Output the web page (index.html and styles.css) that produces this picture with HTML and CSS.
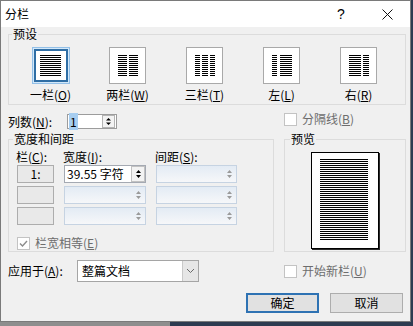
FILE: index.html
```html
<!DOCTYPE html>
<html lang="zh-CN">
<head>
<meta charset="utf-8">
<title>分栏</title>
<link rel="stylesheet" href="styles.css">
</head>
<body>
<div class="window">
  <div class="titlebar">
    <span class="title">分栏</span>
    <span class="cap help">?</span>
    <span class="cap close"><svg width="11" height="11" viewBox="0 0 11 11"><path d="M0.5 0.5L10.5 10.5M10.5 0.5L0.5 10.5" stroke="#111" stroke-width="1"/></svg></span>
  </div>
  <div class="content">
    <fieldset class="group presets">
      <legend>预设</legend>
      <div class="preset-grid">
        <div class="preset">
          <div class="icon sel"><div class="sheet"><i class="col w21"></i></div></div>
          <div class="plabel">一栏(<u>O</u>)</div>
        </div>
        <div class="preset">
          <div class="icon"><div class="sheet"><i class="col w9"></i><i class="col w9"></i></div></div>
          <div class="plabel">两栏(<u>W</u>)</div>
        </div>
        <div class="preset">
          <div class="icon"><div class="sheet"><i class="col w5"></i><i class="col w6"></i><i class="col w5"></i></div></div>
          <div class="plabel">三栏(<u>T</u>)</div>
        </div>
        <div class="preset">
          <div class="icon"><div class="sheet wide-gap"><i class="col w5"></i><i class="col w12"></i></div></div>
          <div class="plabel">左(<u>L</u>)</div>
        </div>
        <div class="preset">
          <div class="icon"><div class="sheet"><i class="col w12"></i><i class="col w6"></i></div></div>
          <div class="plabel">右(<u>R</u>)</div>
        </div>
      </div>
    </fieldset>

    <div class="split numrow">
      <div class="inline">
        <span class="lbl num-lbl">列数(<u>N</u>):</span>
        <div class="spin num-spin">
          <span class="val"><span class="selected">1</span></span>
          <span class="spinbtn boxed"><svg width="11" height="11" viewBox="0 0 11 11"><path d="M3 4.5h5L5.5 2z M3 6.5h5L5.5 9z" fill="#000"/></svg></span>
        </div>
      </div>
      <div class="check disabled up"><span class="box"></span><span>分隔线(<u>B</u>)</span></div>
    </div>

    <div class="split groups">
      <fieldset class="group widths">
        <legend>宽度和间距</legend>
        <div class="table">
          <div class="th">栏(<u>C</u>):</div>
          <div class="th">宽度(<u>I</u>):</div>
          <div class="th">间距(<u>S</u>):</div>

          <div class="colbtn">1:</div>
          <div class="spin field">
            <span class="val">39.55 字符</span>
            <span class="spinbtn boxed"><svg width="11" height="14" viewBox="0 0 11 14"><path d="M3 6h5L5.5 3z M3 8h5L5.5 11z" fill="#000"/></svg></span>
          </div>
          <div class="spin field off">
            <span class="val"></span>
            <span class="spinbtn"><svg width="11" height="14" viewBox="0 0 11 14"><path d="M3 6h5L5.5 3z M3 8h5L5.5 11z" fill="#9a9a9a"/></svg></span>
          </div>

          <div class="colbtn"></div>
          <div class="spin field off">
            <span class="val"></span>
            <span class="spinbtn"><svg width="11" height="14" viewBox="0 0 11 14"><path d="M3 6h5L5.5 3z M3 8h5L5.5 11z" fill="#9a9a9a"/></svg></span>
          </div>
          <div class="spin field off">
            <span class="val"></span>
            <span class="spinbtn"><svg width="11" height="14" viewBox="0 0 11 14"><path d="M3 6h5L5.5 3z M3 8h5L5.5 11z" fill="#9a9a9a"/></svg></span>
          </div>

          <div class="colbtn"></div>
          <div class="spin field off">
            <span class="val"></span>
            <span class="spinbtn"><svg width="11" height="14" viewBox="0 0 11 14"><path d="M3 6h5L5.5 3z M3 8h5L5.5 11z" fill="#9a9a9a"/></svg></span>
          </div>
          <div class="spin field off">
            <span class="val"></span>
            <span class="spinbtn"><svg width="11" height="14" viewBox="0 0 11 14"><path d="M3 6h5L5.5 3z M3 8h5L5.5 11z" fill="#9a9a9a"/></svg></span>
          </div>
        </div>
        <div class="check disabled equal"><span class="box"><svg width="11" height="11" viewBox="0 0 11 11"><path d="M2 5.5l2.5 2.5L9 3" fill="none" stroke="#8c8c8c" stroke-width="1.4"/></svg></span><span>栏宽相等(<u>E</u>)</span></div>
      </fieldset>

      <fieldset class="group preview">
        <legend>预览</legend>
        <div class="page-wrap">
          <div class="page"><div class="page-lines"></div></div>
        </div>
      </fieldset>
    </div>

    <div class="split applyrow">
      <div class="inline">
        <span class="lbl apply-lbl">应用于(<u>A</u>):</span>
        <div class="select">
          <span class="sel-val">整篇文档</span>
          <span class="sel-btn"><svg width="9" height="6" viewBox="0 0 9 6"><path d="M1 1l3.5 3.5L8 1" fill="none" stroke="#6a6a6a" stroke-width="1"/></svg></span>
        </div>
      </div>
      <div class="check disabled mid"><span class="box"></span><span>开始新栏(<u>U</u>)</span></div>
    </div>

    <div class="buttons">
      <div class="btn default">确定</div>
      <div class="btn">取消</div>
    </div>
  </div>
</div>
</body>
</html>
```

FILE: styles.css
```css
* { box-sizing: border-box; }
html, body { margin: 0; padding: 0; }
body {
  width: 413px;
  height: 326px;
  overflow: hidden;
  background: linear-gradient(90deg, #8e8e8e 0, #8e8e8e 170px, #2d3b50 170px);
  font-family: "Noto Sans CJK SC", "Noto Sans", sans-serif;
  font-size: 12px;
  color: #000;
}
u { text-decoration: underline; text-underline-offset: 1px; }

.window {
  width: 411px;
  height: 322px;
  border: 1px solid #7a7a7a;
  background: #f0f0f0;
}

.titlebar {
  height: 26px;
  background: #fff;
  display: flex;
  align-items: center;
}
.title { flex: 1; padding-left: 4px; line-height: 14px; }
.cap {
  width: 46px;
  height: 26px;
  display: flex;
  align-items: center;
  justify-content: center;
}
.help { font-family: "Liberation Sans", sans-serif; font-size: 14px; }

.content { padding: 0 4px 0 7px; }

fieldset.group {
  border: 1px solid #dcdcdc;
  margin: 0;
  min-width: 0;
}
legend { line-height: 14px; padding: 0 1px; }

/* presets */
.presets { margin: 3px 0 0 2px; padding: 6px 0 2px 3px; }
.preset-grid { display: grid; grid-template-columns: repeat(5, 77px); }
.preset { display: flex; flex-direction: column; align-items: center; }
.icon {
  width: 37px;
  height: 37px;
  border: 1px solid #a9a9a9;
  background: #fff;
  display: flex;
}
.icon.sel {
  width: 38px;
  border-color: #93c0e8;
  background: #d3e8f9;
  padding: 1px;
}
.sheet {
  flex: 1;
  background: #fff;
  display: flex;
  align-items: center;
  justify-content: center;
  gap: 2px;
}
.icon.sel .sheet { border: 2px solid #2f6ea5; }
.sheet.wide-gap { gap: 3px; }
.col {
  display: block;
  height: 22px;
  background: repeating-linear-gradient(#000 0 1px, transparent 1px 2px);
}
.w5 { width: 5px; }
.w6 { width: 6px; }
.w9 { width: 9px; }
.w12 { width: 12px; }
.w21 { width: 21px; }
.plabel { margin-top: 4px; line-height: 14px; white-space: nowrap; }

/* generic two-column rows */
.split {
  display: grid;
  grid-template-columns: 266px 1fr;
  column-gap: 10px;
}
.inline { display: flex; align-items: center; }
.lbl { line-height: 15px; white-space: nowrap; }

.numrow { margin-top: 9px; align-items: start; }
.num-lbl { width: 59px; }

.spin {
  display: flex;
  background: #fff;
  border: 1px solid #9c9c9c;
}
.spin .val { flex: 1; line-height: 13px; padding-left: 1px; white-space: nowrap; }
.num-spin { width: 50px; height: 15px; }
.selected { background: #a6cdf0; padding: 0 1px; }
.spinbtn {
  width: 13px;
  display: flex;
  align-items: center;
  justify-content: center;
}
.spinbtn.boxed { border: 1px solid #b4b4b4; background: #f3f3f3; margin: 0 1px 0 0; }

.check { display: flex; align-items: center; gap: 5px; line-height: 14px; white-space: nowrap; }
.check .box {
  width: 13px;
  height: 13px;
  border: 1px solid #c3c3c3;
  background: #fff;
  display: flex;
  align-items: center;
  justify-content: center;
  flex: none;
}
.check.disabled { color: #6d6d6d; }
.check.up { margin-top: -2px; }

/* groups */
.groups { margin-top: 3px; }
.widths { margin: 0 0 0 1px; padding: 4px 6px 1px 8px; }
.widths legend { margin-left: -4px; }
.table {
  display: grid;
  grid-template-columns: 37px 82px 81px;
  grid-template-rows: 12px 18px 18px 18px;
  column-gap: 10px;
  row-gap: 3px;
}
.th { line-height: 14px; white-space: nowrap; margin-left: -1px; }
.colbtn {
  border: 1px solid #adadad;
  background: #e9e9e9;
  display: flex;
  align-items: center;
  justify-content: center;
  line-height: 14px;
}
.field { height: 18px; border-color: #a4a9b2; }
.field .val { line-height: 16px; padding-left: 2px; }
.field.off {
  border-color: #c6d3e2;
  background: linear-gradient(#e3ebf4, #f6f7f9);
}
.field .spinbtn { width: 14px; }
.field .spinbtn.boxed { border-color: #c2c2c2; margin: 0; }
.equal { margin-top: 11px; }

.preview { margin: 0 0 0 -1px; padding: 6px 0 0 0; }
.preview legend { margin-left: 5px; }
.page-wrap { display: flex; justify-content: center; }
.page {
  width: 68px;
  height: 97px;
  border: 1px solid #000;
  box-shadow: 1px 1px 0 #2a2a2a;
  background: #fff;
  padding: 6px 10px 8px 8px;
}
.page-lines {
  height: 81px;
  background: repeating-linear-gradient(#000 0 1px, transparent 1px 2px);
}

/* apply row */
.applyrow { margin-top: 8px; align-items: center; }
.apply-lbl { width: 69px; line-height: 22px; }
.select {
  width: 122px;
  height: 22px;
  border: 1px solid #a5a5a5;
  background: #fff;
  display: flex;
}
.sel-val { flex: 1; padding-left: 4px; line-height: 20px; }
.sel-btn {
  width: 16px;
  background: #e6e6e6;
  border-left: 1px solid #c9c9c9;
  display: flex;
  align-items: center;
  justify-content: center;
}

/* buttons */
.buttons {
  margin-top: 11px;
  margin-right: 3px;
  display: flex;
  justify-content: flex-end;
  gap: 11px;
}
.btn {
  width: 73px;
  height: 20px;
  border: 1px solid #adadad;
  background: #e1e1e1;
  display: flex;
  align-items: center;
  justify-content: center;
  line-height: 14px;
}
.btn.default { border: 2px solid #2e72b3; }
```
